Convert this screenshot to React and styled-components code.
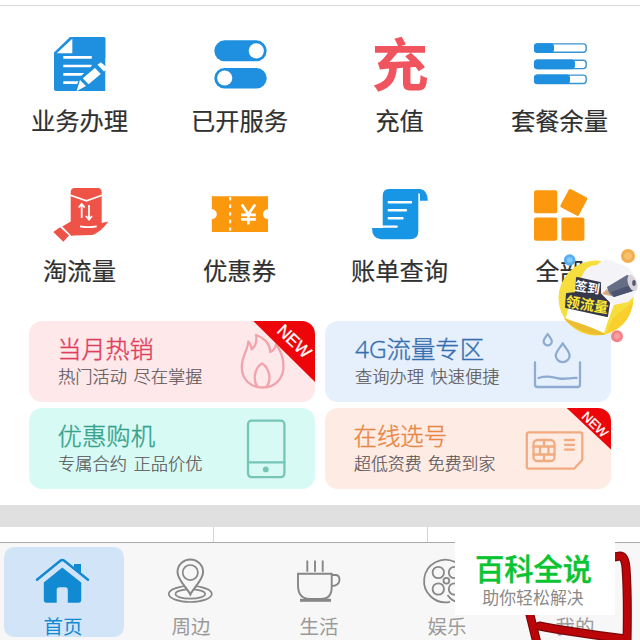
import React from 'react'
import styled, { createGlobalStyle } from 'styled-components'

function BusinessIcon() {
  return (
    <IconSvg viewBox="0 0 60 60">
      <path d="M20 3H54.2Q55.5 3 55.5 4.5V57H6Q4 57 4 55V18.5Z" fill="#1f8fe0" />
      <path d="M6.7 19.3H22.3V4.8Z" fill="#fff" />
      <path d="M13.3 23.3H41.7M13.3 32H41.7M13.3 40.3H36M13.3 48.7H29" stroke="#fff" strokeWidth="2.7" />
      <path d="M24.5 57L30 43L49 25L59 35L39 53Z" fill="#1f8fe0" />
      <path d="M45 34L50.8 40L38.5 50.3L32.8 44.2Z M30 46L36 52L26.5 57.3Z" fill="#fff" />
      <path d="M47.5 30.8L50.8 28.3L56.4 33V36L54 37.6Z" fill="#fff" />
      <path d="M55.5 24H60V60H55.5Z" fill="#fff" />
    </IconSvg>
  )
}

function ServiceIcon() {
  return (
    <IconSvg viewBox="0 0 60 60">
      <rect x="4.3" y="6.3" width="52.4" height="21" rx="10.5" fill="#1f8fe0" />
      <rect x="4.3" y="34" width="52.4" height="20.5" rx="10.2" fill="#1f8fe0" />
      <circle cx="46.3" cy="16.8" r="7.6" fill="#fff" />
      <circle cx="14.7" cy="44" r="7.6" fill="#fff" />
    </IconSvg>
  )
}

function RechargeIcon() {
  return <RechargeMark>充</RechargeMark>
}

function BarsIcon() {
  const bars = [[9.3, 20], [25.6, 41], [40.5, 36]]
  return (
    <IconSvg viewBox="0 0 60 60">
      {bars.map(([y, w]) => (
        <g key={y}>
          <rect x="4.6" y={y + 0.6} width="51.6" height="8.4" rx="3" fill="#fff" stroke="#3a93cf" strokeWidth="1.4" />
          <rect x="4" y={y} width={w} height="9.6" rx="3.4" fill="#1f8fe0" />
        </g>
      ))}
    </IconSvg>
  )
}

function TradeIcon() {
  return (
    <IconSvg viewBox="0 0 60 60">
      <path d="M23.5 4H49Q51.7 5 51.7 8V39L58.3 37.5Q52 47 42.5 51L24 51.5L20 52L11.5 43L20.7 37.5V8Q20.7 5 23.5 4Z" fill="#ef5347" />
      <path d="M10 43.3L19.3 51.3L13.3 57.7L3.3 48Z" fill="#ef5347" />
      <path d="M10.7 42L20.5 52M20.5 11.2L36.5 16.8L52 11.2" stroke="#fff" strokeWidth="1.7" fill="none" />
      <path d="M31.7 34V20M28.7 23.5L31.7 20L34.7 23.5M39 21V35.5M36 32L39 35.5L42 32" stroke="#fff" strokeWidth="1.8" fill="none" />
      <path d="M30 42.3Q38 44 46.7 42.3" stroke="#fff" strokeWidth="1.8" fill="none" />
    </IconSvg>
  )
}

function CouponIcon() {
  return (
    <IconSvg viewBox="0 0 60 60">
      <path d="M1.8 12.3H58V25.3A5 5 0 0 0 58 35.3V48H1.8V35.3A5 5 0 0 0 1.8 25.3Z" fill="#fc980d" />
      <path d="M20.2 13V48" stroke="#fff" strokeWidth="2" strokeDasharray="3.4 4.2" />
      <path d="M31.8 20.5L38.4 30.3L45.1 20.5M38.4 30V40.5M31 30.8H45.8M31 35.4H45.8" stroke="#fff" strokeWidth="2.7" fill="none" />
    </IconSvg>
  )
}

function BillIcon() {
  return (
    <IconSvg viewBox="0 0 60 60">
      <path d="M19 5H50Q57.8 6 57.8 16.8H50V10L48.3 9V47Q48.3 55.3 40 55.3H11Q2 54.5 2 44H12.7V12Q12.7 5 19 5Z" fill="#1896e6" />
      <path d="M18.8 18.2H41M18.8 26.3H36M18.8 34.3H32.5" stroke="#fff" strokeWidth="2.4" strokeLinecap="round" />
      <path d="M12.5 42.6H26.8" stroke="#fff" strokeWidth="2.3" strokeLinecap="round" />
    </IconSvg>
  )
}

function AllIcon() {
  return (
    <IconSvg viewBox="0 0 60 60">
      <g fill="#fc980d">
        <rect x="4" y="6.2" width="23.3" height="23" rx="2" />
        <rect x="4" y="33.5" width="23.3" height="23.2" rx="2" />
        <rect x="31.4" y="33.5" width="23" height="23.2" rx="2" />
        <rect x="33.4" y="8" width="20.8" height="20.8" rx="1.8" transform="rotate(28 43.8 18.4)" />
      </g>
    </IconSvg>
  )
}

function FlameIcon() {
  return (
    <CardSvg viewBox="0 0 90 81" stroke="#f0a5ae">
      <path d="M31 14C38 16 45 22 45.2 31C48.5 29.5 50.5 26.5 51 23.5C56 30 58.5 37 58.5 45C58.5 58 50 66.5 37.5 66.5C25 66.5 16.8 58 16.8 46C16.8 35 23 29 23.3 20.5C25.5 22.5 26.5 25.5 26.7 28.5C30.5 25 32 19 31 14Z" />
      <path d="M32.5 66C27.5 59 29.5 47 37 42.5C44.5 47 47 59 41.5 66" />
    </CardSvg>
  )
}

function WaterIcon() {
  return (
    <CardSvg viewBox="0 0 90 81" stroke="#8eacd0">
      <path d="M26.7 13C24.5 16.5 22.6 18 22.6 20.3A4.1 4 0 0 0 30.8 20.3C30.8 18 28.9 16.5 26.7 13Z" />
      <path d="M41.7 22.3C38 28 34.8 31 34.8 34.5A6.9 6.6 0 0 0 48.6 34.5C48.6 31 45.4 28 41.7 22.3Z" />
      <path d="M14 41.3V63.5Q14 66 16.5 66H56.5Q59 66 59 63.5V41.3" />
      <path d="M17.5 57C26 54.5 31 56 38 57.5C45 58.5 50 56.5 55.5 57" />
    </CardSvg>
  )
}

function PhoneIcon() {
  return (
    <CardSvg viewBox="0 0 90 81" stroke="#76c5b7">
      <rect x="23" y="12.7" width="36.4" height="56.4" rx="3.5" />
      <path d="M23 54.3H59.4" />
      <circle cx="40.8" cy="61.4" r="2.9" fill="#76c5b7" stroke="none" />
    </CardSvg>
  )
}

function SimIcon() {
  return (
    <CardSvg viewBox="0 0 90 81" stroke="#f0ac80">
      <path d="M8 24.3H59Q61.3 24.3 61.3 26.6V52L53 60.7H8Q5.8 60.7 5.8 58.5V26.5Q5.8 24.3 8 24.3Z" />
      <rect x="12.5" y="32" width="21" height="21" rx="4" />
      <path d="M12.5 38.5H33.5M12.5 46.5H33.5M19 38.5V46.5M27.5 38.5V46.5M23 46.5V53M23 32V38.5" />
      <path d="M44 32H53M44 36.8H53M44 41.6H53" />
    </CardSvg>
  )
}

function HomeIcon() {
  return (
    <TabSvg viewBox="0 0 64 56">
      <path d="M42 11H49V24L42 18Z" fill="#128ad2" />
      <path d="M30.3 14.5L49.2 29.5V47Q49.2 49.8 46.5 49.8H35.8V37Q35.8 34.2 33 34.2H27.5Q24.7 34.2 24.7 37V49.8H14.5Q11.8 49.8 11.8 47V29.5Z" fill="#128ad2" />
      <path d="M4.5 27L27.8 8Q30.3 6 32.8 8L56.5 27" stroke="#d2e5f8" strokeWidth="5" fill="none" />
      <path d="M5 26.8L28.3 7.8Q30.3 6.3 32.3 7.8L56 26.8" stroke="#128ad2" strokeWidth="2.5" strokeLinecap="round" fill="none" />
      <path d="M42 11H49V20L42 14.4Z" fill="#128ad2" />
    </TabSvg>
  )
}

function NearbyIcon() {
  return (
    <TabSvg viewBox="0 0 64 56">
      <g fill="none" stroke="#878787" strokeWidth="1.7">
        <ellipse cx="30.3" cy="41" rx="21.5" ry="8" />
        <ellipse cx="30.3" cy="41" rx="14.8" ry="4.7" />
        <path d="M30.3 41.5C26.5 34 17.5 27 17.5 19A12.8 12.6 0 0 1 43.1 19C43.1 27 34 34 30.3 41.5Z" fill="#f7f7f7" strokeWidth="2" />
        <circle cx="30.3" cy="19.6" r="7.6" />
      </g>
    </TabSvg>
  )
}

function LifeIcon() {
  return (
    <TabSvg viewBox="0 0 64 56">
      <g fill="none" stroke="#878787" strokeWidth="1.9">
        <path d="M19.3 7.5V18.7M27 7.5V18.7M34.7 7.5V18.7" />
        <path d="M10 20.8H43.7V34Q43.7 46 33 46H22Q10 46 10 32Z" />
        <path d="M43.7 22H47.5Q51.5 22 51.5 27Q51 33 43.5 33" />
        <path d="M12 47.3H43" strokeWidth="3" />
      </g>
    </TabSvg>
  )
}

function FilmIcon() {
  return (
    <TabSvg viewBox="0 0 64 56">
      <g fill="none" stroke="#878787" strokeWidth="1.8">
        <path d="M34 48.8A21.3 21.3 0 1 1 44 43.5" />
        <circle cx="22.3" cy="19.5" r="5.7" />
        <circle cx="38.5" cy="19.5" r="5.7" />
        <circle cx="22.3" cy="36" r="5.7" />
        <circle cx="38.5" cy="36" r="5.7" />
        <circle cx="30.4" cy="27.7" r="2.9" />
        <path d="M31.5 42Q35 47 40 48.7" />
      </g>
    </TabSvg>
  )
}

// the promo box covers this one
function MineIcon() {
  return <TabSvg viewBox="0 0 64 56" />
}

function Ribbon({ start, drop, cx, cy, size }) {
  return (
    <RibbonSvg viewBox="0 0 90 81">
      <path d={`M${start} 0H90V${drop}Z`} fill="#ec0609" />
      <RibbonText x={cx} y={cy} $size={size} transform={`rotate(44 ${cx} ${cy})`}>NEW</RibbonText>
    </RibbonSvg>
  )
}

function SignInBadge() {
  return (
    <BadgeSvg viewBox="0 0 100 110">
      <circle cx="56" cy="58" r="37.5" fill="#f6de3e" />
      <path d="M24 78Q46 104 75 90Q90 82 93 62L73 78L66 94Z" fill="#f9cf2d" />
      <path d="M42 36Q46 25 57 25Q66 15 77 24Q91 24 95 40Q99 54 88 62L74 65L64 91Q44 88 26 78L30 62L38 52Z" fill="#f4f3f7" />
      <path d="M30 62L26 78Q44 85 64 93L73 64Z" fill="#fff" />
      <path d="M24 79Q46 84 63 93L65 95Q42 96 24 79Z" fill="#edbd31" />
      <path d="M37 38L60 43L60 54L69 63L67 76L26 67L27 54L36 53Z" fill="#35384b" stroke="#35384b" strokeWidth="2" strokeLinejoin="round" />
      <BadgeText x="47.5" y="52" $size={12.5} $color="#fff" transform="rotate(9 47 47)">签到</BadgeText>
      <BadgeText x="47" y="70" $size={14.3} $color="#fbea32" transform="rotate(9 47 65)">领流量</BadgeText>
      <path d="M62 54L67 49L71 56Z" fill="#d9a87d" />
      <path d="M67 47L87 35Q97 37 96 50L74 57Q69 56 67 47Z" fill="#656d87" />
      <path d="M71 52L94 44L96 50L74 57Z" fill="#4b546f" />
      <ellipse cx="92.5" cy="43" rx="4.5" ry="8.5" fill="#d9d4dc" transform="rotate(-20 92.5 43)" />
      <ellipse cx="94" cy="43" rx="1.8" ry="3" fill="#555872" />
      <circle cx="29.7" cy="20" r="5.8" fill="#57aff0" />
      <circle cx="29.7" cy="20" r="2.8" fill="#89c9f5" />
      <circle cx="88" cy="16" r="7" fill="#f4ad4d" />
      <circle cx="88" cy="16" r="3.8" fill="#f8c16f" />
      <circle cx="77" cy="96.3" r="6" fill="#f28389" />
      <circle cx="77" cy="96.3" r="3" fill="#f8a0a0" />
    </BadgeSvg>
  )
}

const scribble = 'M74 22L80 21Q85 21 86 33Q88 60 87 108M-10 80Q-7 92 -3 108M-0.5 91Q14 94 35 97Q60 101 86 104'

const services = [
  { label: '业务办理', Icon: BusinessIcon },
  { label: '已开服务', Icon: ServiceIcon },
  { label: '充值', Icon: RechargeIcon },
  { label: '套餐余量', Icon: BarsIcon },
  { label: '淘流量', Icon: TradeIcon },
  { label: '优惠券', Icon: CouponIcon },
  { label: '账单查询', Icon: BillIcon },
  { label: '全部', Icon: AllIcon },
]

const tabs = [
  { label: '首页', Icon: HomeIcon, active: true },
  { label: '周边', Icon: NearbyIcon },
  { label: '生活', Icon: LifeIcon },
  { label: '娱乐', Icon: FilmIcon },
  { label: '我的', Icon: MineIcon },
]

function App() {
  return (
    <Screen>
      <GlobalStyle />
      <Services>
        {services.map(({ label, Icon }) => (
          <Service key={label}>
            <IconSlot><Icon /></IconSlot>
            <ServiceLabel>{label}</ServiceLabel>
          </Service>
        ))}
      </Services>
      <Cards>
        <Card $bg="#fee8ea">
          <CardText>
            <CardTitle $color="#dc405c">当月热销</CardTitle>
            <CardNote>热门活动 尽在掌握</CardNote>
          </CardText>
          <FlameIcon />
          <Ribbon start={28.3} drop={61} cx={69} cy={20.5} size={17} />
        </Card>
        <Card $bg="#e5f0fc">
          <CardText>
            <CardTitle $color="#376fae" $size={24.4} $indent={1}>4G流量专区</CardTitle>
            <CardNote $indent={1}>查询办理 快速便捷</CardNote>
          </CardText>
          <WaterIcon />
        </Card>
        <Card $bg="#d7fbf4">
          <CardText>
            <CardTitle $color="#36a18c" $size={24.4}>优惠购机</CardTitle>
            <CardNote>专属合约 正品价优</CardNote>
          </CardText>
          <PhoneIcon />
        </Card>
        <Card $bg="#feebe3">
          <CardText>
            <CardTitle $color="#e78743" $size={23.4}>在线选号</CardTitle>
            <CardNote $size={16.9}>超低资费 免费到家</CardNote>
          </CardText>
          <SimIcon />
          <Ribbon start={45.7} drop={41.5} cx={74} cy={16.5} size={13} />
        </Card>
      </Cards>
      <Band />
      <Columns>
        <Column />
        <Column />
        <Column />
      </Columns>
      <TabBar>
        {tabs.map(({ label, Icon, active }) => (
          <Tab key={label} $active={active}>
            <Icon />
            <TabLabel $active={active}>{label}</TabLabel>
          </Tab>
        ))}
      </TabBar>
      <SignInBadge />
      <Scribble viewBox="0 0 100 105">
        <path d={scribble} stroke="#7c0709" strokeWidth="9" />
        <path d={scribble} stroke="#bb0508" strokeWidth="6.6" />
      </Scribble>
      <Promo>
        <PromoTitle>百科全说</PromoTitle>
        <PromoNote>助你轻松解决</PromoNote>
      </Promo>
    </Screen>
  )
}

export default App

const GlobalStyle = createGlobalStyle`
body {
  margin: 0;
  background: #fff;
  overflow: hidden;
}
`;

const Screen = styled.div`
position: relative;
display: flex;
flex-direction: column;
width: 640px;
height: 640px;
overflow: hidden;
background: #fff;
font-family: "Noto Sans CJK SC", sans-serif;
`;

const Services = styled.div`
display: grid;
grid-template-columns: repeat(4, 160px);
grid-auto-rows: 150px;
height: 287px;
margin-top: 5px;
padding-top: 28px;
border-top: 1px solid #d9d9d9;
`;

const Service = styled.div`
display: flex;
flex-direction: column;
align-items: center;
`;

const IconSlot = styled.div`
display: flex;
align-items: center;
justify-content: center;
width: 60px;
height: 60px;
`;

const IconSvg = styled.svg`
display: block;
width: 60px;
height: 60px;
`;

const RechargeMark = styled.span`
margin-bottom: 6px;
font-size: 57px;
line-height: 60px;
font-weight: 700;
color: #f0545e;
`;

const ServiceLabel = styled.div`
margin: 11px 1px 0 0;
font-size: 24.3px;
line-height: 30px;
white-space: nowrap;
color: #303030;
-webkit-text-stroke: 0.2px #303030;
`;

const Cards = styled.div`
display: grid;
grid-template-columns: 286px 286px;
grid-auto-rows: 81px;
gap: 6px 10px;
height: 184px;
padding-left: 29px;
`;

const Card = styled.div`
position: relative;
display: flex;
justify-content: space-between;
overflow: hidden;
border-radius: 13px;
background: ${(p) => p.$bg};
`;

const CardText = styled.div`
padding: 13px 0 0 29px;
white-space: nowrap;
`;

const CardTitle = styled.div`
margin-left: ${(p) => p.$indent || -0.5}px;
font-family: "Open Sans", "Noto Sans CJK SC", sans-serif;
font-size: ${(p) => p.$size || 24}px;
line-height: 30px;
font-weight: 300;
color: ${(p) => p.$color};
-webkit-text-stroke: 0.4px ${(p) => p.$color};
`;

const CardNote = styled.div`
margin-left: ${(p) => p.$indent || 0}px;
font-size: ${(p) => p.$size || 17.3}px;
line-height: 23px;
font-weight: 300;
word-spacing: 2.5px;
color: #5c5658;
-webkit-text-stroke: 0.2px #5c5658;
`;

const CardSvg = styled.svg`
flex: none;
width: 90px;
height: 81px;
fill: none;
stroke-width: 2.3px;
stroke-linejoin: round;
stroke-linecap: round;
`;

/* corner ribbon, lies over the card */
const RibbonSvg = styled.svg`
position: absolute;
top: 0;
right: 0;
width: 90px;
height: 81px;
`;

const RibbonText = styled.text`
font-family: "Liberation Sans", sans-serif;
font-size: ${(p) => p.$size}px;
text-anchor: middle;
dominant-baseline: central;
fill: #fff;
stroke: #fff;
stroke-width: 0.3px;
`;

const Band = styled.div`
height: 22px;
background: #e0e0e0;
`;

const Columns = styled.div`
display: grid;
grid-template-columns: 213px 214px 1fr;
height: 15px;
`;

const Column = styled.div`
border-left: 1px solid #d5d5d5;

&:first-child {
  border-left: 0;
}
`;

const TabBar = styled.div`
display: flex;
height: 93px;
padding-top: 4px;
border-top: 1px solid #a9a9a9;
background: #f7f7f7;
`;

const Tab = styled.div`
display: flex;
flex-direction: column;
align-items: center;
width: 120px;
height: 90px;
margin: 0 4px;
padding-top: 6px;
box-sizing: border-box;
border-radius: 10px;
background: ${(p) => (p.$active ? '#d2e5f8' : 'transparent')};
`;

const TabSvg = styled.svg`
flex: none;
width: 64px;
height: 56px;
`;

const TabLabel = styled.div`
margin: 3px 2px 0 0;
font-size: 19.5px;
line-height: 28px;
color: ${(p) => (p.$active ? '#128ad2' : '#9a9a9a')};
`;

const BadgeSvg = styled.svg`
position: absolute;
left: 540px;
top: 240px;
width: 100px;
height: 110px;
`;

const BadgeText = styled.text`
font-size: ${(p) => p.$size}px;
font-weight: 700;
text-anchor: middle;
fill: ${(p) => p.$color};
`;

const Scribble = styled.svg`
position: absolute;
left: 540px;
top: 535px;
width: 100px;
height: 105px;
overflow: visible;
fill: none;
stroke-linecap: round;
`;

/* floating box over the tab bar */
const Promo = styled.div`
position: absolute;
left: 455px;
top: 527px;
width: 160px;
height: 88px;
padding-top: 22px;
box-sizing: border-box;
text-align: center;
background: #fff;
`;

const PromoTitle = styled.div`
margin-right: 3px;
font-size: 29.3px;
line-height: 36px;
font-weight: 500;
color: #0bc431;
-webkit-text-stroke: 0.4px #0bc431;
`;

const PromoNote = styled.div`
margin: 2px 4px 0 0;
font-size: 16.9px;
line-height: 20px;
color: #8a8a8a;
`;
